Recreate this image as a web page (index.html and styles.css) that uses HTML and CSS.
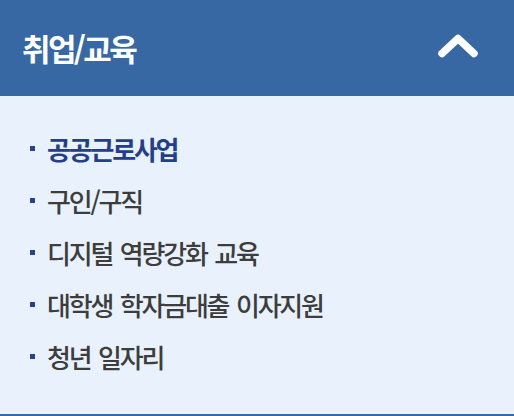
FILE: index.html
```html
<!DOCTYPE html>
<html lang="ko">
<head>
<meta charset="utf-8">
<link rel="stylesheet" href="styles.css">
</head>
<body>
<div class="panel">
  <div class="head">
    <h2 class="title">취업/교육</h2>
    <svg class="chev" width="44" height="30" viewBox="0 0 44 30" aria-hidden="true">
      <path d="M6 21.5 L22 6.5 L38 21.5" fill="none" stroke="#fff" stroke-width="7.5" stroke-linecap="round" stroke-linejoin="round"/>
    </svg>
  </div>
  <ul class="menu">
    <li class="item active">공공근로사업</li>
    <li class="item">구인/구직</li>
    <li class="item">디지털 역량강화 교육</li>
    <li class="item">대학생 학자금대출 이자지원</li>
    <li class="item">청년 일자리</li>
  </ul>
</div>
</body>
</html>
```
FILE: styles.css
```css
html, body {
  margin: 0;
  padding: 0;
}
body {
  width: 514px;
  height: 416px;
  overflow: hidden;
  background: #e9f2fc;
  font-family: "Noto Sans CJK KR", "Noto Sans", sans-serif;
}
.panel {
  height: 416px;
  box-sizing: border-box;
  border-bottom: 2px solid #3768a3;
  background: #e9f2fc;
}
.head {
  height: 96px;
  background: #3768a3;
  display: flex;
  align-items: center;
  justify-content: space-between;
  padding: 0 34px 0 22px;
}
.title {
  margin: 0;
  color: #fff;
  font-size: 31px;
  font-weight: 700;
  letter-spacing: -2.6px;
  line-height: 1;
  padding-bottom: 2px;
}
.chev {
  display: block;
  margin-top: -3px;
}
.menu {
  list-style: none;
  margin: 0;
  padding: 26px 0 0 30px;
}
.item {
  display: flex;
  align-items: center;
  height: 52px;
  font-size: 26px;
  font-weight: 500;
  color: #3d3d3d;
  letter-spacing: -2.2px;
  word-spacing: 2.5px;
}
.item::before {
  content: "";
  width: 5px;
  height: 5px;
  background: #27418b;
  margin-right: 12px;
  flex: none;
}
.item.active {
  color: #243f8a;
  font-weight: 700;
}
```
